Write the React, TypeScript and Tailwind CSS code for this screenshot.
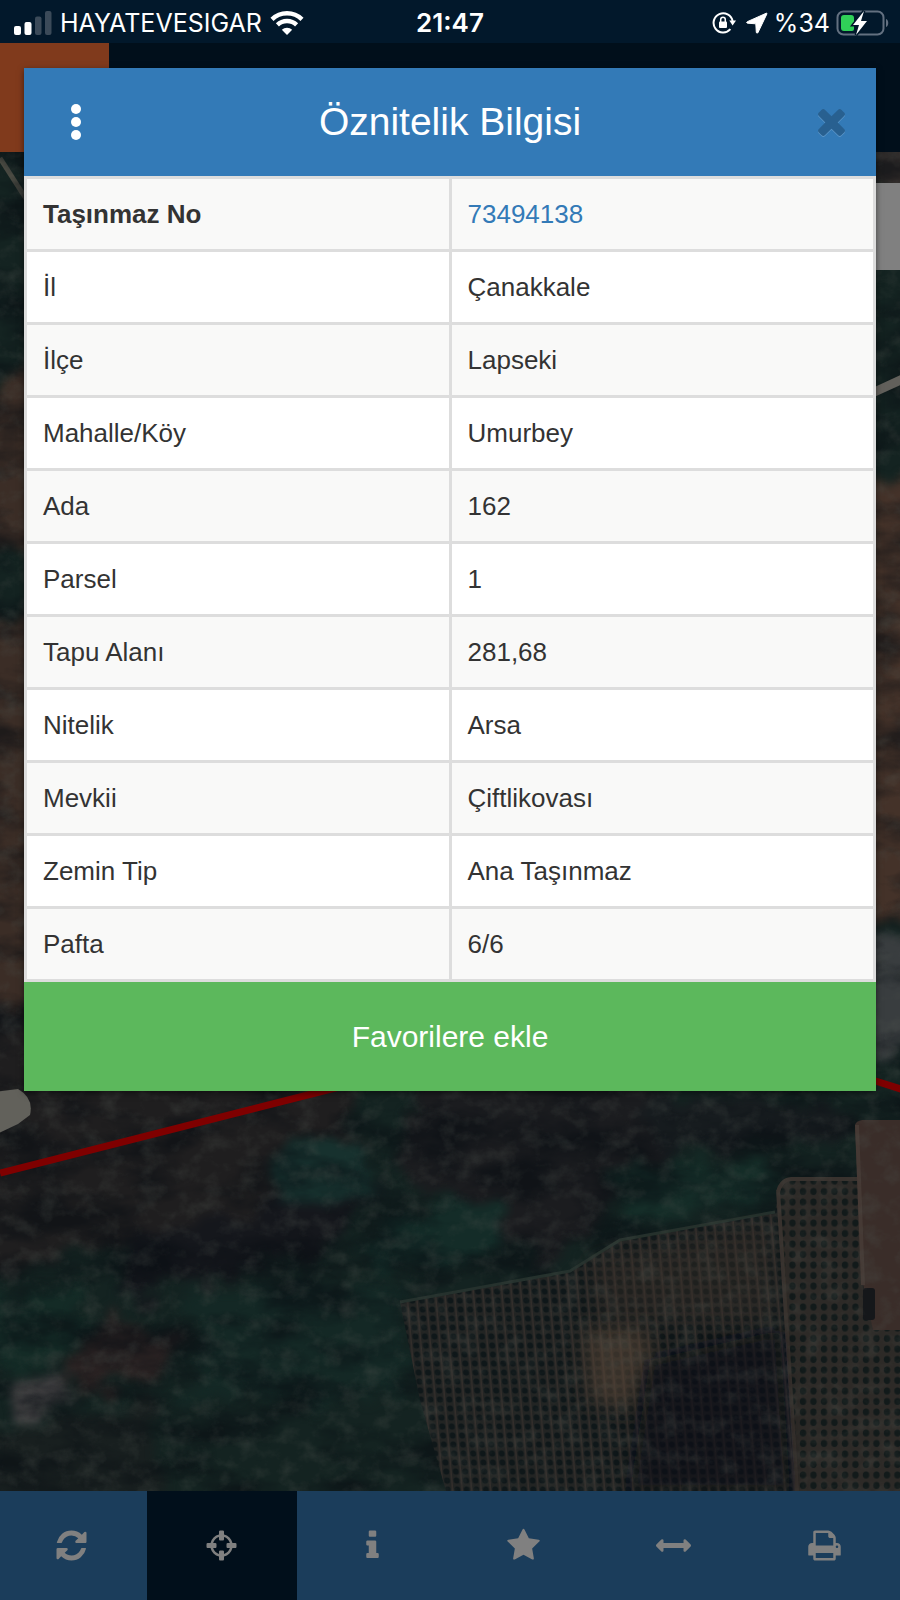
import React from "react";

const ICONS = {
  refresh:
    "M1511 928q0 5-1 7-64 268-268 434.5t-478 166.5q-146 0-282.5-55t-243.5-157l-129 129q-19 19-45 19t-45-19-19-45v-448q0-26 19-45t45-19h448q26 0 45 19t19 45-19 45l-137 137q71 66 161 102t187 36q134 0 250-65t186-179q11-17 53-117 8-23 30-23h192q13 0 22.5 9.5t9.5 22.5zm25-800v448q0 26-19 45t-45 19h-448q-26 0-45-19t-19-45 19-45l138-138q-148-137-349-137-134 0-250 65t-186 179q-11 17-53 117-8 23-30 23h-199q-13 0-22.5-9.5t-9.5-22.5v-7q65-268 270-434.5t480-166.5q146 0 284 55.5t245 156.5l130-129q19-19 45-19t45 19 19 45z",
  target:
    "M1325 1024h-109q-26 0-45-19t-19-45v-128q0-26 19-45t45-19h109q-32-108-112.5-188.5t-188.5-112.5v109q0 26-19 45t-45 19h-128q-26 0-45-19t-19-45v-109q-108 32-188.5 112.5t-112.5 188.5h109q26 0 45 19t19 45v128q0 26-19 45t-45 19h-109q32 108 112.5 188.5t188.5 112.5v-109q0-26 19-45t45-19h128q26 0 45 19t19 45v109q108-32 188.5-112.5t112.5-188.5zm339-192v128q0 26-19 45t-45 19h-143q-37 161-154.5 278.5t-278.5 154.5v143q0 26-19 45t-45 19h-128q-26 0-45-19t-19-45v-143q-161-37-278.5-154.5t-154.5-278.5h-143q-26 0-45-19t-19-45v-128q0-26 19-45t45-19h143q37-161 154.5-278.5t278.5-154.5v-143q0-26 19-45t45-19h128q26 0 45 19t19 45v143q161 37 278.5 154.5t154.5 278.5h143q26 0 45 19t19 45z",
  info: "M1216 1344v128q0 26-19 45t-45 19h-512q-26 0-45-19t-19-45v-128q0-26 19-45t45-19h64v-384h-64q-26 0-45-19t-19-45v-128q0-26 19-45t45-19h384q26 0 45 19t19 45v576h64q26 0 45 19t19 45zm-128-1152v192q0 26-19 45t-45 19h-256q-26 0-45-19t-19-45v-192q0-26 19-45t45-19h256q26 0 45 19t19 45z",
  star: "M1728 647q0 22-26 48l-363 354 86 500q1 7 1 20 0 21-10.5 35.5t-30.5 14.5q-19 0-40-12l-449-236-449 236q-22 12-40 12-21 0-31.5-14.5t-10.5-35.5q0-6 2-20l86-500-364-354q-25-27-25-48 0-37 56-46l502-73 225-455q19-41 49-41t49 41l225 455 502 73q56 9 56 46z",
  measure:
    "M1792 896q0 26-19 45l-256 256q-19 19-45 19t-45-19-19-45v-128h-1024v128q0 26-19 45t-45 19-45-19l-256-256q-19-19-19-45t19-45l256-256q19-19 45-19t45 19 19 45v128h1024v-128q0-26 19-45t45-19 45 19l256 256q19 19 19 45z",
  print:
    "M448 1536h896v-256h-896v256zm0-640h896v-384h-160q-40 0-68-28t-28-68v-160h-640v640zm1152 64q0-26-19-45t-45-19-45 19-19 45 19 45 45 19 45-19 19-45zm128 0v416q0 13-9.5 22.5t-22.5 9.5h-224v160q0 40-28 68t-68 28h-960q-40 0-68-28t-28-68v-160h-224q-13 0-22.5-9.5t-9.5-22.5v-416q0-79 56.5-135.5t135.5-56.5h64v-544q0-40 28-68t68-28h672q40 0 88 20t76 48l152 152q28 28 48 76t20 88v256h64q79 0 135.5 56.5t56.5 135.5z",
  times:
    "M1490 1322q0 40-28 68l-136 136q-28 28-68 28t-68-28l-294-294-294 294q-28 28-68 28t-68-28l-136-136q-28-28-28-68t28-68l294-294-294-294q-28-28-28-68t28-68l136-136q28-28 68-28t68 28l294 294 294-294q28-28 68-28t68 28l136 136q28 28 28 68t-28 68l-294 294 294 294q28 28 28 68z",
};

function Glyph({ name, viewBox = "0 0 1792 1792", className }: { name: keyof typeof ICONS; viewBox?: string; className: string }) {
  return (
    <svg viewBox={viewBox} fill="currentColor" aria-hidden="true" className={className}>
      <path d={ICONS[name]} />
    </svg>
  );
}

const rows: { label: string; value: string; lead?: boolean }[] = [
  { label: "Taşınmaz No", value: "73494138", lead: true },
  { label: "İl", value: "Çanakkale" },
  { label: "İlçe", value: "Lapseki" },
  { label: "Mahalle/Köy", value: "Umurbey" },
  { label: "Ada", value: "162" },
  { label: "Parsel", value: "1" },
  { label: "Tapu Alanı", value: "281,68" },
  { label: "Nitelik", value: "Arsa" },
  { label: "Mevkii", value: "Çiftlikovası" },
  { label: "Zemin Tip", value: "Ana Taşınmaz" },
  { label: "Pafta", value: "6/6" },
];

const tools: { label: string; icon: keyof typeof ICONS; viewBox?: string; active?: boolean }[] = [
  { label: "Yenile", icon: "refresh", viewBox: "-128 -128 1792 1792" },
  { label: "Konum", icon: "target", active: true },
  { label: "Bilgi", icon: "info" },
  { label: "Favoriler", icon: "star" },
  { label: "Ölçüm", icon: "measure" },
  { label: "Yazdır", icon: "print" },
];

function StatusBar() {
  return (
    <div className="grid h-[43px] grid-cols-[1fr_auto_1fr] items-center bg-[#02182b] pt-0.5 font-['Inter','Liberation_Sans',sans-serif] text-white">
      <div className="flex items-center gap-2 pl-3.5">
        <svg viewBox="0 0 38 24" className="h-6 w-[38px]" aria-hidden="true">
          <rect x="0" y="15" width="7" height="9" rx="2" fill="#fff" />
          <rect x="10.500" y="11" width="7" height="13" rx="2" fill="#fff" />
          <rect x="21" y="5.500" width="6.500" height="18.500" rx="2" fill="#3b4a59" />
          <rect x="31" y="0" width="6.500" height="24" rx="2" fill="#3b4a59" />
        </svg>
        <span className="text-[25px] leading-8">HAYATEVESIGAR</span>
        <svg viewBox="0 0 34 25" className="h-[25px] w-[34px]" aria-hidden="true" fill="none" stroke="#fff" strokeWidth="4.400">
          <path d="M2 9.300a21.500 21.500 0 0 1 30 0" />
          <path d="M7.400 14.900a13.800 13.800 0 0 1 19.200 0" />
          <path d="M17 25l-5.200-5.200a7.400 7.400 0 0 1 10.400 0z" fill="#fff" stroke="none" />
        </svg>
      </div>
      <span className="text-[26px] leading-8 font-semibold">21:47</span>
      <div className="flex items-center justify-end gap-1.5 pr-2.5">
        <svg viewBox="0 0 24 24" className="h-6 w-6" aria-hidden="true">
          <path d="M18.400 18.200A9.600 9.600 0 1 1 20.600 10" fill="none" stroke="#fff" strokeWidth="2" />
          <path d="M17.300 9.500h6.700l-3.400 5z" fill="#fff" />
          <rect x="7" y="10.500" width="8" height="6.500" rx="1" fill="#fff" />
          <path d="M8.700 11V8.500a2.300 2.300 0 0 1 4.600 0V11" fill="none" stroke="#fff" strokeWidth="1.500" />
        </svg>
        <svg viewBox="0 0 22 22" className="ml-1 h-[22px] w-[22px]" aria-hidden="true">
          <path d="M20.300 1.200 1.300 9.700c-1 .5-.7 1.400.3 1.500l8.200.6.500 8.400c.1 1.100 1.200 1.300 1.700.3L20.900 1.900c.2-.6-.1-.9-.6-.7z" fill="#fff" stroke="#fff" />
        </svg>
        <span className="text-[25px] leading-8">%34</span>
        <svg viewBox="0 0 54 28" className="h-7 w-[54px]" aria-hidden="true">
          <rect x="1.500" y="2.500" width="46" height="23" rx="6" fill="none" stroke="#637080" strokeWidth="2" />
          <path d="M50 10c3 1 3 7 0 8z" fill="#637080" />
          <path d="M8 6h7a3 3 0 0 1 3 3v11a2 2 0 0 1-2 2H8a3 3 0 0 1-3-3V9a3 3 0 0 1 3-3z" fill="#30d158" />
          <path d="M28 2 17 16h6l-3 10 11-14h-6l3-10z" fill="#fff" stroke="#02182b" strokeWidth="3" paintOrder="stroke" />
        </svg>
      </div>
    </div>
  );
}

function SatelliteMap() {
  return (
    <svg viewBox="0 152 900 1339" preserveAspectRatio="xMidYMax slice" className="absolute inset-0 h-full w-full" aria-hidden="true">
      <defs>
        <filter id="grain" x="0" y="0" width="100%" height="100%" colorInterpolationFilters="sRGB">
          <feTurbulence type="fractalNoise" baseFrequency="0.05 0.06" numOctaves="5" seed="8" />
          <feColorMatrix values="0 0 0 0 0.3  0 0 0 0 0.32  0 0 0 0 0.3  1.2 0 0 0 -0.55" />
        </filter>
        <filter id="shade" x="0" y="0" width="100%" height="100%" colorInterpolationFilters="sRGB">
          <feTurbulence type="fractalNoise" baseFrequency="0.012 0.025" numOctaves="5" seed="3" />
          <feColorMatrix values="0 0 0 0 0.03  0 0 0 0 0.05  0 0 0 0 0.07  0 3 0 0 -1.2" />
        </filter>
        <filter id="rough" x="-20%" y="-20%" width="140%" height="140%" colorInterpolationFilters="sRGB">
          <feTurbulence type="fractalNoise" baseFrequency="0.03" numOctaves="4" seed="5" />
          <feDisplacementMap in="SourceGraphic" scale="50" xChannelSelector="R" yChannelSelector="G" />
          <feGaussianBlur stdDeviation="5" />
        </filter>
        <filter id="soft" x="-20%" y="-20%" width="140%" height="140%">
          <feGaussianBlur stdDeviation="9" />
        </filter>
        <pattern id="trees" width="9.500" height="9" patternUnits="userSpaceOnUse" patternTransform="skewX(5)">
          <rect width="9.500" height="9" fill="#222423" />
          <rect x="8" width="1.500" height="9" fill="#332e2b" />
          <ellipse cx="4" cy="4.500" rx="3" ry="3.200" fill="#0f1719" />
        </pattern>
        <pattern id="grove" width="10.500" height="10.500" patternUnits="userSpaceOnUse">
          <rect width="10.500" height="10.500" fill="#2d2a27" />
          <ellipse cx="5" cy="5" rx="3.200" ry="3.500" fill="#121a1a" />
        </pattern>
      </defs>
      <rect y="152" width="900" height="1339" fill="#142321" />
      <path d="M0 158 30 205" stroke="#4b4b43" strokeWidth="5" />
      <g filter="url(#rough)">
        <path d="M-40 420 60 350V560L-40 540zM-40 610 70 625V1000L-40 1015z" fill="#3b2d26" />
        <path d="M840 120h100v60h-100z" fill="#342d2b" />
        <path d="M840 480h100v440h-100z" fill="#443229" />
        <path d="M840 940h100v110h-100z" fill="#393d3f" />
        <path d="M-40 1000 340 1060 360 1170 270 1230 100 1250-40 1280z" fill="#1f1e1f" />
        <path d="M440 1060h200l30 100-130 110-90-70-60-40z" fill="#1b1c1f" />
        <path d="M130 1240 260 1200 390 1180 330 1250 210 1280 120 1300z" fill="#15171c" />
        <path d="M640 1090 860 1110 850 1140 660 1150z" fill="#171c1f" />
        <path d="M275 1155 310 1135 345 1150 380 1185 320 1212 275 1210z" fill="#17312e" />
        <path d="M600 1170 690 1160 790 1170 770 1200 620 1225z" fill="#152d28" />
        <path d="M400 1210 500 1200 500 1240 440 1270 360 1260z" fill="#142c28" />
        <path d="M-20 1290 80 1290 90 1330 40 1370-20 1370z" fill="#142b26" />
        <path d="M180 1290 400 1280 410 1400 180 1400 210 1340z" fill="#142825" />
        <path d="M60 1370 110 1310 180 1345 150 1380 90 1395z" fill="#2b2323" />
        <path d="M10 1415 30 1385 60 1370 80 1395 35 1412z" fill="#4b494a" />
        <path d="M-20 1435 150 1400 160 1530H-20z" fill="#181f1f" />
      </g>
      <rect y="152" width="900" height="1339" filter="url(#shade)" opacity=".55" />
      <path d="M400 1302 450 1293 570 1271 620 1240 775 1212 780 1184 790 1179 858 1177V1491H446L420 1400z" fill="url(#trees)" />
      <path d="M778 1190 790 1179 900 1177V1491H796z" fill="url(#grove)" />
      <path d="M400 1302 450 1293 570 1271 620 1240 775 1212" fill="none" stroke="#25312d" strokeWidth="3" />
      <path d="M778 1192Q781 1180 791 1179H858M778 1190 797 1491" fill="none" stroke="#38322e" strokeWidth="4" />
      <path d="M855 1125Q856 1121 862 1120H900V1330H873L862 1280z" fill="#3a2d29" />
      <path d="M857 1125 863 1285" stroke="#453934" strokeWidth="4" />
      <rect x="863" y="1288" width="12" height="32" rx="3" fill="#15171a" />
      <path d="M583 1330 640 1325 655 1350 630 1410 590 1400z" fill="#5a4638" opacity=".55" filter="url(#soft)" />
      <path d="M590 1260 770 1225 775 1320 600 1320z" fill="#3d3029" opacity=".35" filter="url(#soft)" />
      <path d="M650 1360 780 1330 790 1491H630z" fill="#090f16" opacity=".6" filter="url(#soft)" />
      <rect y="152" width="900" height="1339" filter="url(#grain)" opacity=".6" />
      <path d="M-5 1092 18 1089Q34 1098 30 1115L18 1124-5 1135z" fill="#62615b" />
      <path d="M870 394 905 378" stroke="#62605b" strokeWidth="9" />
      <path d="M0 1173 410 1069M866 1078l38 12" stroke="#7f0000" strokeWidth="7" />
    </svg>
  );
}

function AttributeDialog() {
  return (
    <section role="dialog" aria-labelledby="dialog-title" className="absolute inset-x-6 top-[68px] bg-white shadow-[0_2px_6px_rgba(0,0,0,0.5)]">
      <header className="grid h-[108px] grid-cols-[104px_1fr_104px] items-center bg-[#337ab7] text-white">
        <button type="button" aria-label="Menü" className="flex h-full items-center justify-center">
          <svg viewBox="0 0 10 36" className="h-9 w-2.5" fill="currentColor" aria-hidden="true">
            <circle cx="5" cy="5" r="5" />
            <circle cx="5" cy="18" r="5" />
            <circle cx="5" cy="31" r="5" />
          </svg>
        </button>
        <h1 id="dialog-title" className="pb-0.5 text-center text-[39px] leading-none">
          Öznitelik Bilgisi
        </h1>
        <button type="button" aria-label="Kapat" className="flex h-full items-center justify-center pl-3.5 text-[#286090]">
          <Glyph name="times" viewBox="302 366 1188 1188" className="h-[27px] w-[27px] drop-shadow-[0_1px_0_#5c96c8]" />
        </button>
      </header>
      <table className="w-full table-fixed border-collapse border-2 border-[#ddd] text-[26px] leading-9 text-[#333]">
        <tbody>
          {rows.map((row) => (
            <tr key={row.label} className="h-[73px] odd:bg-[#f9f9f8]">
              <th scope="row" className={row.lead ? "border-[3px] border-[#ddd] px-4 text-left font-bold" : "border-[3px] border-[#ddd] px-4 text-left font-normal"}>
                {row.label}
              </th>
              <td className="border-[3px] border-[#ddd] px-4">
                {row.lead ? (
                  <a href="#tasinmaz" className="text-[#337ab7]">
                    {row.value}
                  </a>
                ) : (
                  row.value
                )}
              </td>
            </tr>
          ))}
        </tbody>
      </table>
      <button type="button" className="block h-[109px] w-full bg-[#5cb85c] text-[30px] text-white">
        Favorilere ekle
      </button>
    </section>
  );
}

export default function App() {
  return (
    <div className="relative flex min-h-screen flex-col overflow-hidden bg-[#010f1b] font-['Liberation_Sans',Arial,sans-serif]">
      <StatusBar />
      <div className="flex h-[109px] bg-[#010f1b]">
        <div className="w-[109px] bg-[#803a1c]" />
      </div>
      <main className="relative min-h-[960px] flex-1">
        <SatelliteMap />
        <div className="absolute top-[31px] right-0 h-[87px] w-12 bg-[#808080]" />
      </main>
      <nav className="relative overflow-hidden bg-[#1b3d5b]">
        <div className="-ml-1 grid grid-cols-6">
          {tools.map((tool) => (
            <button
              key={tool.label}
              type="button"
              aria-label={tool.label}
              className={
                tool.active
                  ? "flex h-[109px] items-center justify-center bg-[#010f1b] text-[#808080]"
                  : "flex h-[109px] items-center justify-center text-[#808080]"
              }
            >
              <Glyph name={tool.icon} viewBox={tool.viewBox} className="h-[35px] w-[35px]" />
            </button>
          ))}
        </div>
      </nav>
      <AttributeDialog />
    </div>
  );
}
